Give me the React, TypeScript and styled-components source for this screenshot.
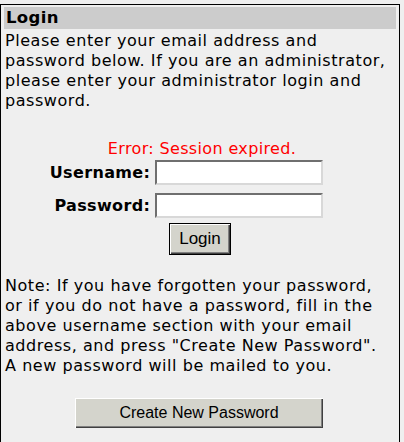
import styled, { createGlobalStyle } from "styled-components";

const GlobalStyle = createGlobalStyle`
  html, body {
    margin: 0;
    padding: 0;
    background: #efefef;
  }
  body {
    font-family: "DejaVu Sans", Verdana, sans-serif;
    font-size: 16px;
    letter-spacing: 0.35px;
    color: #000;
  }
`;

const Page = styled.div`
  padding: 4px 4px 0 0;
`;

const Panel = styled.div`
  border: 1px solid #000;
  border-bottom: none;
  background: #efefef;
  padding: 2px 3px 14px 3px;
  min-height: 440px;
  box-sizing: border-box;
`;

const Heading = styled.h2`
  margin: 0;
  background: #cccccc;
  font-size: 16.5px;
  font-weight: bold;
  line-height: 22px;
  padding: 0 0 0 2px;
`;

const Paragraph = styled.p`
  margin: 0;
  padding: 2px 0 0 1px;
  line-height: 20px;
  letter-spacing: 0.55px;
  white-space: nowrap;
`;

const LoginForm = styled.form`
  display: flex;
  flex-direction: column;
  align-items: center;
  margin-top: 28px;
`;

const ErrorText = styled.div`
  color: #ff0000;
  line-height: 20px;
  padding-left: 4px;
`;

const FieldGrid = styled.div`
  display: grid;
  grid-template-columns: auto 168px;
  column-gap: 5px;
  row-gap: 8px;
  align-items: center;
  margin-top: 1px;
  margin-right: 27px;
`;

const Label = styled.label`
  font-weight: bold;
  text-align: right;
`;

const TextInput = styled.input`
  box-sizing: border-box;
  width: 168px;
  height: 25px;
  border: 2px solid;
  border-color: #6f6f6f #d8d8d8 #d8d8d8 #6f6f6f;
  background: #fff;
  padding: 0 3px;
  font: inherit;
  outline: none;
`;

const LoginButton = styled.button`
  box-sizing: border-box;
  margin-top: 5px;
  height: 32px;
  width: 62px;
  padding: 0;
  border: 1px solid #000;
  background: #d4d4cc;
  box-shadow: inset 1px 1px 0 #fff, inset -1px -1px 0 #404040, inset -2px -2px 0 #808080;
  font-family: "Liberation Sans", Arial, sans-serif;
  font-size: 17px;
  letter-spacing: 0;
  color: #000;
`;

const Note = styled(Paragraph)`
  margin: 20px 0 0 0;
  padding-top: 1px;
`;

const Actions = styled.div`
  display: flex;
  justify-content: center;
  margin-top: 22px;
`;

const CreateButton = styled.button`
  box-sizing: border-box;
  width: 248px;
  height: 30px;
  padding: 0;
  margin-right: 2px;
  border: none;
  background: #d4d4cc;
  box-shadow: inset 1px 1px 0 #fff, inset -1px -1px 0 #404040, inset -2px -2px 0 #808080;
  font-family: "Liberation Sans", Arial, sans-serif;
  font-size: 16px;
  letter-spacing: 0;
  color: #000;
`;

export default function App() {
  return (
    <>
      <GlobalStyle />
      <Page>
        <Panel>
          <Heading>Login</Heading>
          <Paragraph>
            Please enter your email address and
            <br />
            password below. If you are an administrator,
            <br />
            please enter your administrator login and
            <br />
            password.
          </Paragraph>
          <LoginForm onSubmit={(e) => e.preventDefault()}>
            <ErrorText>Error: Session expired.</ErrorText>
            <FieldGrid>
              <Label htmlFor="username">Username:</Label>
              <TextInput id="username" type="text" />
              <Label htmlFor="password">Password:</Label>
              <TextInput id="password" type="password" />
            </FieldGrid>
            <LoginButton type="submit">Login</LoginButton>
          </LoginForm>
          <Note>
            Note: If you have forgotten your password,
            <br />
            or if you do not have a password, fill in the
            <br />
            above username section with your email
            <br />
            address, and press "Create New Password".
            <br />
            A new password will be mailed to you.
          </Note>
          <Actions>
            <CreateButton type="button">Create New Password</CreateButton>
          </Actions>
        </Panel>
      </Page>
    </>
  );
}
